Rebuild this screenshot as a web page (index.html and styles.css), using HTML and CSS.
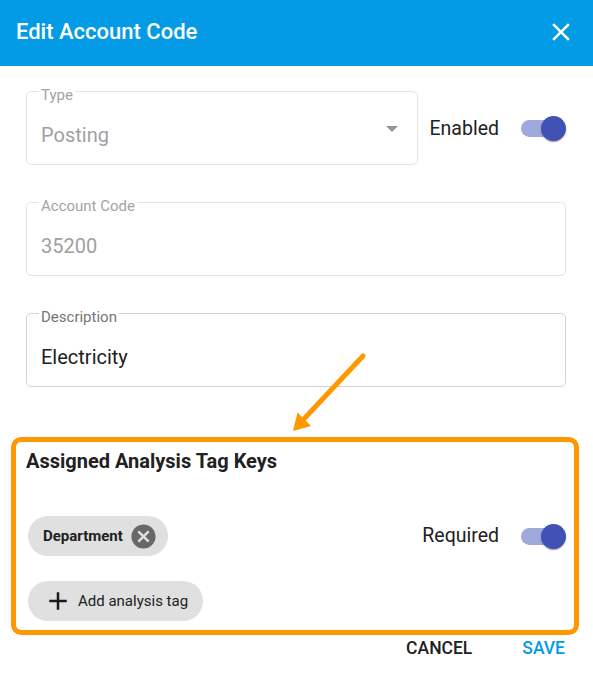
FILE: index.html
```html
<!DOCTYPE html>
<html lang="en">
<head>
<meta charset="utf-8">
<title>Edit Account Code</title>
<link rel="stylesheet" href="styles.css">
</head>
<body>
<div class="dialog">
  <header class="titlebar">
    <h2 class="title">Edit Account Code</h2>
    <svg class="close" viewBox="0 0 24 24"><path d="M19 6.41L17.59 5 12 10.59 6.41 5 5 6.41 10.59 12 5 17.59 6.41 19 12 13.41 17.59 19 19 17.59 13.41 12z"/></svg>
  </header>

  <div class="content">
    <div class="row">
      <fieldset class="field field--disabled field--grow">
        <legend>Type</legend>
        <div class="input">
          <span class="value">Posting</span>
          <svg class="caret" viewBox="0 0 12 6"><path d="M0 0h12L6 6z"/></svg>
        </div>
      </fieldset>
      <div class="switch-group switch-group--offset">
        <span class="switch-label">Enabled</span>
        <span class="switch"></span>
      </div>
    </div>

    <fieldset class="field field--disabled">
      <legend>Account Code</legend>
      <div class="input"><span class="value">35200</span></div>
    </fieldset>

    <fieldset class="field field--active">
      <legend>Description</legend>
      <div class="input"><span class="value">Electricity</span></div>
    </fieldset>
  </div>

  <section class="tags">
    <h3 class="tags-title">Assigned Analysis Tag Keys</h3>
    <div class="tags-row">
      <span class="chip chip--tag">
        <span class="chip-label">Department</span>
        <svg class="chip-delete" viewBox="0 0 24 24"><path d="M12 2C6.47 2 2 6.47 2 12s4.47 10 10 10 10-4.47 10-10S17.53 2 12 2zm5 13.59L15.59 17 12 13.41 8.41 17 7 15.59 10.59 12 7 8.41 8.41 7 12 10.59 15.59 7 17 8.41 13.41 12 17 15.59z"/></svg>
      </span>
      <div class="switch-group">
        <span class="switch-label">Required</span>
        <span class="switch"></span>
      </div>
    </div>
    <div class="chip chip--add">
      <svg class="chip-add-icon" viewBox="0 0 24 24"><path d="M19 13h-6v6h-2v-6H5v-2h6V5h2v6h6v2z"/></svg>
      <span class="chip-label">Add analysis tag</span>
    </div>
  </section>

  <div class="actions">
    <button class="btn">Cancel</button>
    <button class="btn btn--primary">Save</button>
  </div>

  <svg class="annotation" viewBox="0 0 593 677" width="593" height="677">
    <line x1="363" y1="356" x2="302" y2="421" stroke="#ff9800" stroke-width="5" stroke-linecap="round"/>
    <polygon points="293,431 297.5,412.5 311,426" fill="#ff9800"/>
  </svg>
</div>
</body>
</html>
```

FILE: styles.css
```css
* {
  box-sizing: border-box;
}

body {
  margin: 0;
  background: #ffffff;
  font-family: Roboto, "Noto Sans", "Liberation Sans", sans-serif;
  color: rgba(0, 0, 0, 0.87);
}

.dialog {
  position: relative;
  width: 593px;
  height: 677px;
  overflow: hidden;
}

/* Title bar */
.titlebar {
  height: 66px;
  background: #039be5;
  color: #ffffff;
  display: flex;
  align-items: center;
  justify-content: space-between;
  padding: 0 17px 3px 16px;
}

.title {
  margin: 0;
  font-size: 22px;
  font-weight: 500;
  line-height: 28px;
}

.close {
  width: 30px;
  height: 30px;
  margin-top: 1px;
  fill: #ffffff;
}

/* Form fields */
.content {
  display: flex;
  flex-direction: column;
  gap: 26px;
  padding: 13.5px 27px 0 26px;
}

.row {
  display: flex;
  align-items: center;
  gap: 12px;
}

.field {
  margin: 0;
  min-width: 0;
  border: 1px solid #e4e4e4;
  border-radius: 5px;
  padding: 0 12px 17px;
}

.field--grow {
  flex: 1;
}

.field legend {
  font-size: 15px;
  line-height: 15px;
  padding: 8px 2px 0;
  color: #a3a3a3;
}

.field--active {
  border-color: #d2d2d2;
}

.field--active legend {
  color: #767676;
}

.input {
  display: flex;
  align-items: center;
  padding: 20px 0 0 2px;
  font-size: 20px;
  line-height: 24px;
}

.field--disabled .value {
  color: #a0a0a0;
}

.field--active .value {
  color: #212121;
}

.caret {
  width: 12px;
  height: 6px;
  fill: #959595;
  margin: 0 7px 12px auto;
}

/* Switches */
.switch-group {
  display: flex;
  align-items: center;
  gap: 22px;
  font-size: 19.5px;
  line-height: 24px;
  color: #212121;
}

.switch-group--offset {
  margin-top: 13px;
}

.switch {
  position: relative;
  flex: none;
  width: 45px;
  height: 25px;
}

.switch::before {
  content: "";
  position: absolute;
  left: 0;
  top: 4px;
  width: 38px;
  height: 17px;
  border-radius: 8.5px;
  background: #9fa8da;
}

.switch::after {
  content: "";
  position: absolute;
  right: 0;
  top: 0;
  width: 25px;
  height: 25px;
  border-radius: 50%;
  background: #3f51b5;
  box-shadow: 0 2px 1px -1px rgba(0, 0, 0, 0.2), 0 1px 1px 0 rgba(0, 0, 0, 0.14), 0 1px 3px 0 rgba(0, 0, 0, 0.12);
}

/* Analysis tags */
.tags {
  margin: 50.5px 14px 0 11px;
  border: 5px solid #ff9800;
  border-radius: 10px;
  padding: 7px 8px 9px 11px;
}

.tags-title {
  margin: 0 0 0 -1px;
  font-size: 20px;
  font-weight: 700;
  line-height: 24px;
  color: #212121;
}

.tags-row {
  display: flex;
  align-items: center;
  justify-content: space-between;
  margin-top: 43px;
  padding-left: 1px;
}

.chip {
  display: inline-flex;
  align-items: center;
  height: 40px;
  border-radius: 20px;
  background: #e0e0e0;
  color: #212121;
}

.chip--tag {
  padding: 0 10px 0 15px;
  font-size: 15px;
  font-weight: 700;
}

.chip-delete {
  width: 29px;
  height: 29px;
  margin-left: 6px;
  fill: #686868;
}

.chip--add {
  margin: 25px 0 0 1px;
  padding: 0 15px;
  font-size: 15px;
}

.chip-add-icon {
  width: 30px;
  height: 30px;
  margin-right: 5px;
  fill: #1a1a1a;
}

/* Actions */
.actions {
  display: flex;
  justify-content: flex-end;
  gap: 50px;
  padding: 3px 28px 0 0;
}

.btn {
  border: 0;
  padding: 0;
  background: none;
  font-family: Roboto, "Noto Sans", sans-serif;
  font-size: 17.5px;
  font-weight: 500;
  line-height: 20px;
  letter-spacing: 0;
  text-transform: uppercase;
  color: #212121;
}

.btn--primary {
  color: #039be5;
}

/* Annotation arrow */
.annotation {
  position: absolute;
  left: 0;
  top: 0;
  pointer-events: none;
}
```
